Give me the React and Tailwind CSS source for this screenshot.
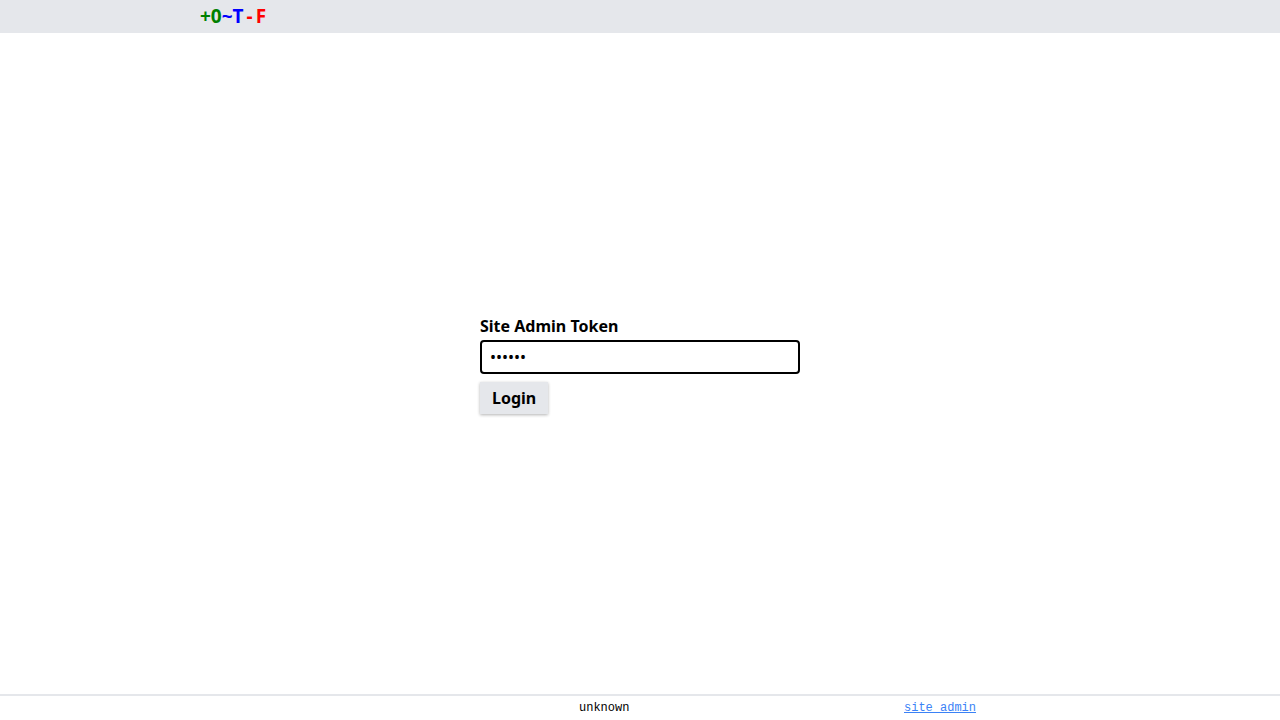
import React from "react";

export default function App() {
  return (
    <div className="flex min-h-screen flex-col bg-white font-['Noto_Sans',sans-serif] text-black">
      <header className="h-[33px] bg-gray-200">
        <div className="mx-auto flex h-full max-w-[896px] items-center px-2">
          <a href="#" className="flex items-center text-[19px] font-bold leading-none">
            <span className="text-[#008000]">+0</span>
            <span className="text-[#0000ff]">~T</span>
            <span className="mx-[3px] text-[#ff0000]">-</span>
            <span className="text-[#ff0000]">F</span>
          </a>
        </div>
      </header>

      <main className="flex flex-1 items-center justify-center">
        <form className="flex w-80 flex-col" onSubmit={(e) => e.preventDefault()}>
          <label htmlFor="token" className="text-base font-bold leading-6">
            Site Admin Token
          </label>
          <input
            id="token"
            type="password"
            defaultValue="secret"
            className="mt-[2px] h-[34px] rounded border-2 border-black px-2 text-base outline-none"
          />
          <div className="mt-2">
            <button
              type="submit"
              className="h-8 bg-gray-200 px-3 text-base font-bold shadow-[0_1px_3px_rgba(0,0,0,0.3)]"
            >
              Login
            </button>
          </div>
        </form>
      </main>

      <footer className="h-[26px] border-t-2 border-gray-200 font-['Liberation_Mono',monospace] text-xs">
        <div className="mx-auto grid h-full max-w-[896px] grid-cols-[387px_325px_auto] items-center">
          <span></span>
          <span>unknown</span>
          <a href="#" className="text-[#3b82f6] underline">
            site admin
          </a>
        </div>
      </footer>
    </div>
  );
}
